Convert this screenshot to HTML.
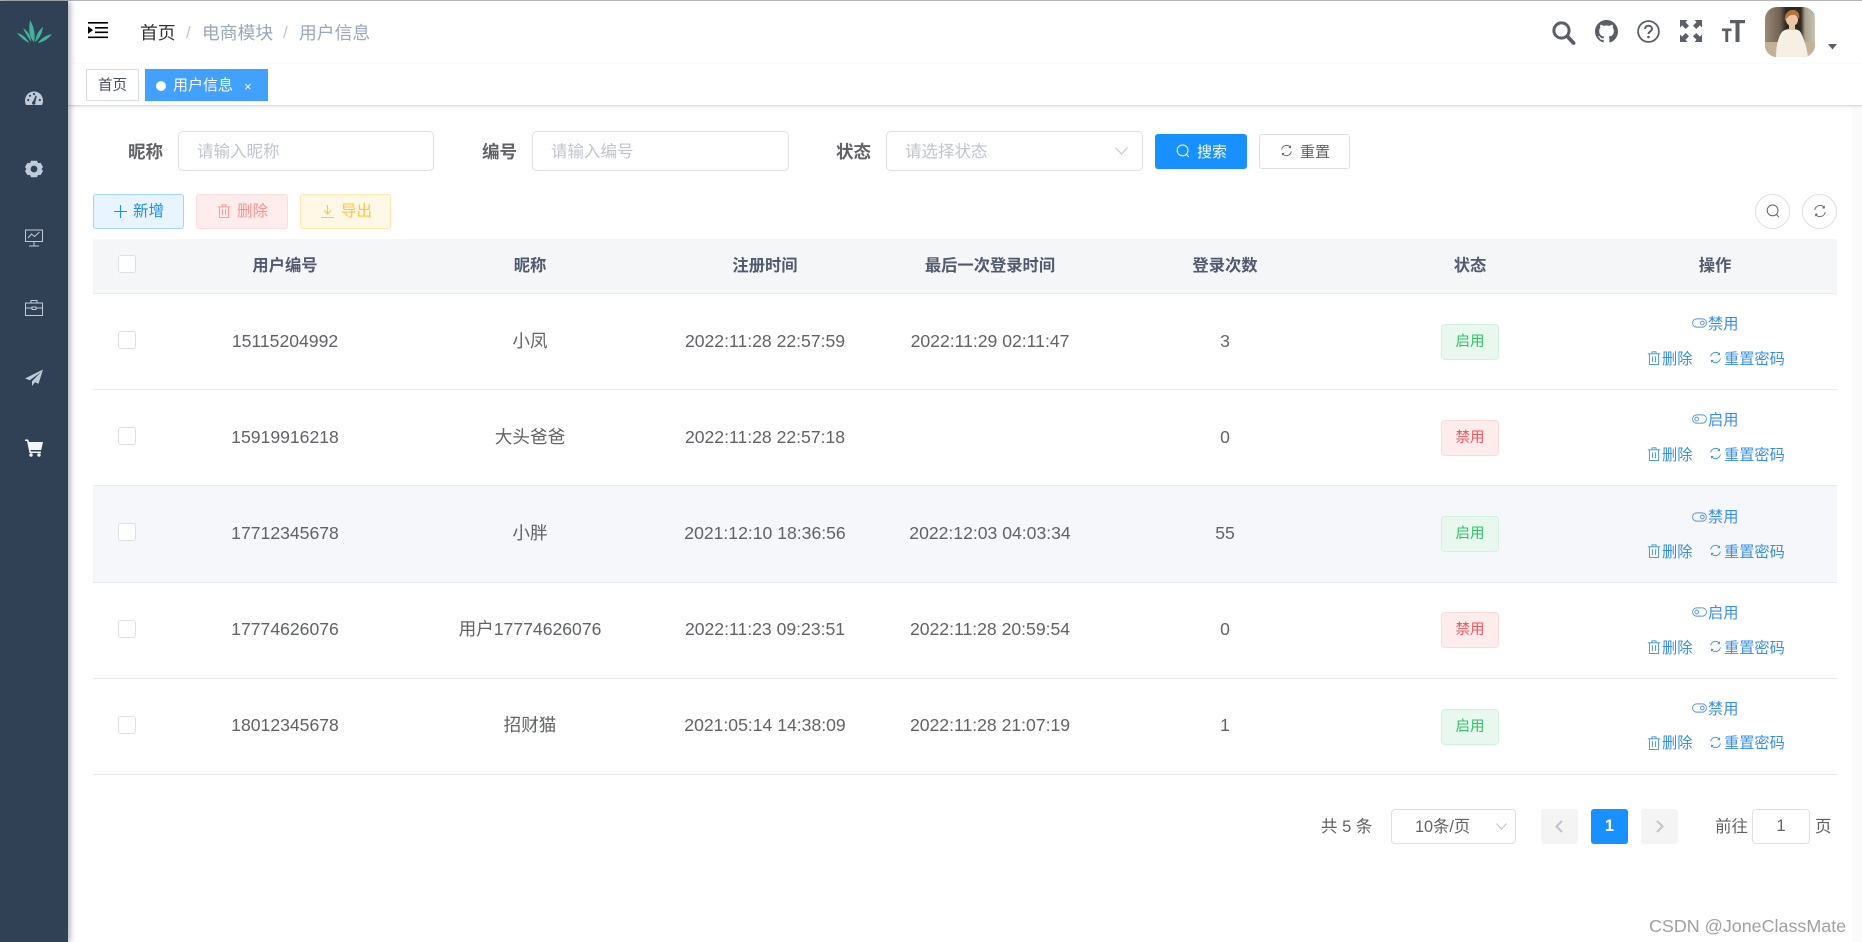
<!DOCTYPE html>
<html lang="zh-CN">
<head>
<meta charset="utf-8">
<title>用户信息</title>
<style>
*{box-sizing:border-box;margin:0;padding:0}
html,body{width:1862px;height:942px;overflow:hidden;background:#fff}
body{position:relative;font-family:"Liberation Sans","Noto Sans CJK SC",sans-serif;color:#606266}
.a{position:absolute}
.t{position:absolute;white-space:nowrap;line-height:24px;height:24px;margin-top:1px}
.c{position:absolute;white-space:nowrap;line-height:24px;height:24px;text-align:center;font-size:17.6px;color:#606266;transform:translateX(-50%)}
.c.h{font-weight:700;font-size:16.3px;color:#515a6e;margin-top:1px}
.cb{position:absolute;left:118px;width:18px;height:18px;border:1px solid #dcdfe6;border-radius:3px;background:#fff}
.ln{position:absolute;left:93px;width:1744px;height:1px;background:#e8eaee}
.tag{position:absolute;left:1441px;width:58px;height:36px;border-radius:4px;font-size:14.5px;line-height:34px;text-align:center;border:1px solid}
.on{background:#e8f8ee;border-color:#d1f1de;color:#2fc069}
.off{background:#feecec;border-color:#fcdada;color:#f0555d}
.l{position:absolute;white-space:nowrap;font-size:15.2px;line-height:20px;height:20px;margin-top:2px;color:#3a8ee6}
.box{position:absolute;background:#fff;border:1px solid #dcdfe6;border-radius:5px}
.ph{position:absolute;font-size:16.5px;color:#c0c4cc;line-height:24px;white-space:nowrap;margin-top:1px}
.lb{position:absolute;font-size:17.5px;font-weight:700;color:#606266;line-height:24px;white-space:nowrap;margin-top:1px}
svg{position:absolute;overflow:visible}
.st{fill:none;stroke:currentColor}
</style>
</head>
<body>
<svg width="0" height="0" style="left:0;top:0">
<defs>
<symbol id="trash" viewBox="0 0 14 14"><path class="st" stroke-width=".9" d="M.8 2.800h12.400M5 2.800V.8h4v2M2.400 2.800v10.600h9.200V2.800M5.400 5.200v5.800M8.600 5.200v5.800" fill="none"/></symbol>
<symbol id="ref" viewBox="0 0 14 14"><path class="st" stroke-width=".9" fill="none" d="M1.800 6A5.300 5.300 0 0 1 11 3.200M12.200 8a5.300 5.300 0 0 1-9.200 2.800"/><path fill="currentColor" d="M11.800 1.400v3H8.900zM2.200 12.600v-3h2.900z"/></symbol>
<symbol id="swoff" viewBox="0 0 16 10"><rect class="st" x=".6" y=".6" width="14.800" height="8.800" rx="4.400" fill="none" stroke-width="1"/><circle class="st" cx="11" cy="5" r="2" fill="none" stroke-width="1"/></symbol>
<symbol id="swon" viewBox="0 0 16 10"><rect class="st" x=".6" y=".6" width="14.800" height="8.800" rx="4.400" fill="none" stroke-width="1"/><circle class="st" cx="5" cy="5" r="2" fill="none" stroke-width="1"/></symbol>
<symbol id="mag" viewBox="0 0 14 14"><circle class="st" cx="6.600" cy="6.400" r="5.400" fill="none" stroke-width="1"/><path class="st" stroke-width="1" d="M10.400 10.400l2.400 2.600" fill="none"/></symbol>
</defs>
</svg>

<!-- top line -->
<div class="a" style="left:0;top:0;width:1862px;height:1px;background:#b9b9b9"></div>
<!-- right strip -->
<div class="a" style="left:1852px;top:1px;width:10px;height:941px;background:#fbfbfc"></div>

<!-- header -->
<div class="a" style="left:68px;top:1px;width:1794px;height:63px;background:#fff;box-shadow:0 1px 4px rgba(0,21,41,.08)"></div>
<!-- tags bar -->
<div class="a" style="left:68px;top:64px;width:1794px;height:42px;background:#fff;border-bottom:1px solid #d8dce5;box-shadow:0 1px 3px rgba(0,0,0,.1)"></div>

<!-- sidebar -->
<div class="a" style="left:0;top:1px;width:68px;height:941px;background:#304156;box-shadow:2px 0 6px rgba(0,21,41,.35)"></div>

<!-- logo -->
<svg style="left:16px;top:19px" width="37" height="24" viewBox="0 0 37 24">
<path fill="#3eb49b" d="M18 23C12 17 13 8 14 1c3 5 6 14 4 22z"/>
<path fill="#3eb49b" d="M19 23c1-6 3-11 8-15-1 6-3 11-8 15z"/>
<path fill="#3eb49b" d="M15 23C12 18 9 14 7 9c5 3 8 8 8 14z"/>
<path fill="#3eb49b" d="M13 24C9 22 4 18 1 14c5 1 10 5 12 10z"/>
<path fill="#3eb49b" d="M22 24c3-5 9-8 14-9-3 4-8 8-14 9z"/>
</svg>

<!-- sidebar icons -->
<svg style="left:25px;top:89px" width="18" height="18" viewBox="0 0 18 18"><path fill="#bfcbd9" d="M9 2.500C4 2.500 0 6.600 0 11.600c0 1.600.4 3 1 4.400h16c.6-1.400 1-2.800 1-4.400 0-5-4-9.100-9-9.100z"/><g fill="#304156"><circle cx="3.200" cy="11" r="1.100"/><circle cx="5" cy="6.800" r="1.100"/><circle cx="9" cy="5" r="1.100"/><circle cx="14.800" cy="11" r="1.100"/><path d="M10.700 6.500l1.100.4-1.500 6.500a1.700 1.700 0 1 1-2.300-.9z"/></g></svg>
<svg style="left:25px;top:160px" width="18" height="18" viewBox="0 0 18 18"><path fill="#bfcbd9" fill-rule="evenodd" d="M6 .8h6l1 2.300 2.600-.2L18 7l-1.500 2 1.500 2-2.400 4.100-2.600-.2-1 2.300H6l-1-2.300-2.600.2L0 11l1.500-2L0 7l2.400-4.100 2.600.2zM9 5.600a3.400 3.400 0 1 0 0 6.800 3.400 3.400 0 0 0 0-6.800z"/></svg>
<svg style="left:25px;top:229px;color:#bfcbd9" width="18" height="18" viewBox="0 0 18 18"><path class="st" fill="none" stroke-width="1" d="M.5 1h17v11.500H.5zM9 12.500V17M4 17h10M3 9l3.500-4 3 2.500 5-4.500"/></svg>
<svg style="left:25px;top:299px;color:#bfcbd9" width="18" height="18" viewBox="0 0 18 18"><path class="st" fill="none" stroke-width="1" d="M.5 4h17v12.500H.5zM6 4V1.500h6V4M.5 9h6.500M11 9h6.500M7 8h4v2.500H7z"/></svg>
<svg style="left:25px;top:369px" width="18" height="18" viewBox="0 0 18 18"><path fill="#bfcbd9" d="M18 .5L0 9.500l4.800 1.800L16 3 7 12.300V17l3-3.700 3.500 1.500z"/></svg>
<svg style="left:25px;top:439px" width="18" height="18" viewBox="0 0 18 18"><path fill="#f2f5f8" d="M0 .5h3.200l.8 2.500h14l-1.800 8H5.500l.4 1.500H16v1.500H4.500L2 2H0z"/><circle cx="6" cy="16" r="1.700" fill="#f2f5f8"/><circle cx="14" cy="16" r="1.700" fill="#f2f5f8"/></svg>

<!-- hamburger -->
<svg style="left:88px;top:21px" width="20" height="18" viewBox="0 0 20 18"><path fill="#000" d="M0 1h20v1.600H0zM7 6h13v1.600H7zM7 10.500h13v1.600H7zM0 15.500h20v1.600H0zM0 5.200l5 3.900-5 3.800z"/></svg>

<!-- breadcrumb -->
<div class="t" style="left:140px;top:20px;font-size:17.800px;color:#303133">首页</div>
<div class="t" style="left:186px;top:20px;font-size:17px;color:#c0c4cc">/</div>
<div class="t" style="left:202px;top:20px;font-size:17.800px;color:#97a8be">电商模块</div>
<div class="t" style="left:283px;top:20px;font-size:17px;color:#c0c4cc">/</div>
<div class="t" style="left:299px;top:20px;font-size:17.800px;color:#97a8be">用户信息</div>

<!-- header right icons -->
<svg style="left:1552px;top:21px" width="24" height="24" viewBox="0 0 24 24"><circle cx="9.500" cy="9.500" r="7.600" fill="none" stroke="#5a5e66" stroke-width="3"/><path stroke="#5a5e66" stroke-width="3.800" stroke-linecap="round" d="M15.500 15.500l6 6.500"/></svg>
<svg style="left:1595px;top:20px" width="23" height="23" viewBox="0 0 16 16"><path fill="#5a5e66" d="M8 0C3.580 0 0 3.580 0 8c0 3.540 2.290 6.530 5.470 7.590.4.070.55-.17.55-.38 0-.19-.01-.82-.01-1.490-2.010.37-2.530-.49-2.690-.94-.09-.23-.48-.94-.82-1.130-.28-.15-.68-.52-.01-.53.63-.01 1.080.58 1.230.82.720 1.210 1.870.870 2.330.66.070-.52.280-.87.510-1.070-1.780-.2-3.640-.89-3.640-3.950 0-.87.31-1.590.82-2.150-.08-.2-.36-1.020.08-2.120 0 0 .67-.21 2.200.82.640-.18 1.320-.27 2-.27s1.360.09 2 .27c1.530-1.040 2.200-.82 2.200-.82.440 1.100.16 1.920.08 2.120.51.560.82 1.270.82 2.150 0 3.070-1.870 3.750-3.650 3.950.29.250.54.730.54 1.480 0 1.070-.01 1.930-.01 2.200 0 .21.150.46.550.38A8.010 8.010 0 0 0 16 8c0-4.420-3.580-8-8-8z"/></svg>
<svg style="left:1637px;top:20px" width="23" height="23" viewBox="0 0 23 23"><circle cx="11.500" cy="11.500" r="10.400" fill="none" stroke="#5a5e66" stroke-width="1.800"/><path fill="none" stroke="#5a5e66" stroke-width="2" d="M8 9c0-2 1.500-3.200 3.500-3.200S15 7 15 8.800c0 2.500-3.500 2.700-3.500 5.200"/><circle cx="11.500" cy="17" r="1.300" fill="#5a5e66"/></svg>
<svg style="left:1680px;top:20px" width="22" height="22" viewBox="0 0 22 22"><path fill="#5a5e66" d="M0 0h7.500L5.400 2.100 9 5.700 5.700 9 2.100 5.400 0 7.500zM22 0v7.500l-2.100-2.100L16.300 9 13 5.700l3.600-3.600L14.500 0zM0 22v-7.500l2.100 2.100L5.700 13 9 16.300l-3.600 3.600L7.500 22zM22 22h-7.500l2.100-2.100-3.600-3.600 3.300-3.300 3.600 3.600 2.100-2.100z"/></svg>
<svg style="left:1722px;top:20px" width="23" height="23" viewBox="0 0 23 23"><path fill="#5a5e66" d="M8 0h15v3.200h-5.500V22H13.500V3.200H8zM0 8.500h9.500v2.600H6.200V22H3.300V11.100H0z"/></svg>

<!-- avatar -->
<svg style="left:1765px;top:7px" width="50" height="50" viewBox="0 0 50 50">
<defs><clipPath id="av"><rect width="50" height="50" rx="12"/></clipPath>
<linearGradient id="avg" x1="0" x2="1"><stop offset="0" stop-color="#9a8a76"/><stop offset=".3" stop-color="#6f6152"/><stop offset=".42" stop-color="#2e2822"/><stop offset=".72" stop-color="#2f2a26"/><stop offset=".8" stop-color="#a89f8c"/><stop offset="1" stop-color="#c9c4b4"/></linearGradient></defs>
<g clip-path="url(#av)">
<rect width="50" height="50" fill="url(#avg)"/>
<rect y="35" width="50" height="15" fill="#c4b196"/>
<path fill="#f5efe4" d="M11 50c0-10 2-20 6-25 3-3 7-3 10-3 4 0 8 1 9 4 3 6 6 15 7 24z"/>
<circle cx="27" cy="13" r="6" fill="#e9c6a6"/>
<path fill="#b8713a" d="M20 14c-1-7 3-11 8-11 5 0 7 4 6 9-2-3-4-5-7-4-3 0-5 3-7 6z"/>
<path fill="#e9c6a6" d="M24 17h6v6h-6z"/>
<path fill="#3fb89f" d="M46 4l4 0 0 6z"/>
</g></svg>
<svg style="left:1828px;top:44px" width="9" height="6" viewBox="0 0 9 6"><path fill="#5a5e66" d="M0 0h9L4.500 5.500z"/></svg>

<!-- tags -->
<div class="a" style="left:86px;top:69px;width:53px;height:32px;background:#fff;border:1px solid #d8dce5;font-size:14.500px;line-height:32px;text-align:center;color:#495060">首页</div>
<div class="a" style="left:145px;top:69px;width:123px;height:32px;background:#42a0ff"></div>
<div class="a" style="left:156px;top:81px;width:10px;height:10px;border-radius:50%;background:#fff"></div>
<div class="t" style="left:173px;top:73px;font-size:15px;color:#fff">用户信息</div>
<div class="t" style="left:244px;top:74px;font-size:13px;color:#fff">×</div>

<!-- search form -->
<div class="lb" style="left:128px;top:139px">昵称</div>
<div class="box" style="left:178px;top:131px;width:256px;height:40px"></div>
<div class="ph" style="left:197px;top:139px">请输入昵称</div>
<div class="lb" style="left:482px;top:139px">编号</div>
<div class="box" style="left:532px;top:131px;width:257px;height:40px"></div>
<div class="ph" style="left:551px;top:139px">请输入编号</div>
<div class="lb" style="left:836px;top:139px">状态</div>
<div class="box" style="left:886px;top:131px;width:257px;height:40px"></div>
<div class="ph" style="left:905px;top:139px">请选择状态</div>
<svg style="left:1115px;top:147px" width="13" height="8" viewBox="0 0 13 8"><path fill="none" stroke="#c0c4cc" stroke-width="1.100" d="M.5.500l6 6.500 6-6.500"/></svg>
<div class="a" style="left:1155px;top:134px;width:92px;height:35px;background:#1890ff;border-radius:3px"></div>
<svg style="left:1176px;top:144px;color:#fff" width="14" height="14"><use href="#mag"/></svg>
<div class="t" style="left:1197px;top:140px;font-size:15px;color:#fff">搜索</div>
<div class="box" style="left:1259px;top:134px;width:91px;height:35px;border-radius:3px"></div>
<svg style="left:1280px;top:144px;color:#606266" width="13" height="13"><use href="#ref"/></svg>
<div class="t" style="left:1300px;top:140px;font-size:15px;color:#606266">重置</div>

<!-- toolbar -->
<div class="a" style="left:93px;top:194px;width:91px;height:35px;border-radius:3px;background:#e8f4ff;border:1px solid #a3d3ff"></div>
<svg style="left:114px;top:205px" width="13" height="13" viewBox="0 0 13 13"><path stroke="#1890ff" stroke-width="1.100" d="M6.500 0v13M0 6.500h13"/></svg>
<div class="t" style="left:133px;top:199px;font-size:15.500px;color:#1890ff">新增</div>
<div class="a" style="left:196px;top:194px;width:92px;height:35px;border-radius:3px;background:#ffeded;border:1px solid #ffdbdb"></div>
<svg style="left:217px;top:204px;color:#ff8e8e" width="14" height="14"><use href="#trash"/></svg>
<div class="t" style="left:237px;top:199px;font-size:15.500px;color:#ff9090">删除</div>
<div class="a" style="left:300px;top:194px;width:91px;height:35px;border-radius:3px;background:#fff8e6;border:1px solid #ffe7ad"></div>
<svg style="left:321px;top:205px" width="13" height="13" viewBox="0 0 13 13"><path fill="none" stroke="#ffc440" stroke-width="1.100" d="M6.500 0v8.500M3 5.500l3.500 3.500L10 5.500M0 12.500h13"/></svg>
<div class="t" style="left:341px;top:199px;font-size:15.500px;color:#ffc440">导出</div>
<div class="a" style="left:1755px;top:194px;width:35px;height:35px;border-radius:50%;border:1px solid #dcdfe6"></div>
<svg style="left:1766px;top:204px;color:#606266" width="14" height="14"><use href="#mag"/></svg>
<div class="a" style="left:1802px;top:194px;width:35px;height:35px;border-radius:50%;border:1px solid #dcdfe6"></div>
<svg style="left:1813px;top:204px;color:#606266" width="14" height="14"><use href="#ref"/></svg>

<!-- table header -->
<div class="a" style="left:93px;top:239px;width:1744px;height:54px;background:#f5f6f8"></div>
<div class="ln" style="top:293px"></div>
<div class="cb" style="top:255px"></div>
<div class="c h" style="left:285px;top:253px">用户编号</div>
<div class="c h" style="left:530px;top:253px">昵称</div>
<div class="c h" style="left:765px;top:253px">注册时间</div>
<div class="c h" style="left:990px;top:253px">最后一次登录时间</div>
<div class="c h" style="left:1225px;top:253px">登录次数</div>
<div class="c h" style="left:1470px;top:253px">状态</div>
<div class="c h" style="left:1715px;top:253px">操作</div>

<!-- row 1 -->
<div class="ln" style="top:389px"></div>
<div class="cb" style="top:331px"></div>
<div class="c" style="left:285px;top:329px">15115204992</div>
<div class="c" style="left:530px;top:329px">小凤</div>
<div class="c" style="left:765px;top:329px">2022:11:28 22:57:59</div>
<div class="c" style="left:990px;top:329px">2022:11:29 02:11:47</div>
<div class="c" style="left:1225px;top:329px">3</div>
<div class="tag on" style="top:324px">启用</div>
<svg style="left:1692px;top:318px;color:#5a8fe0" width="15" height="10"><use href="#swoff"/></svg>
<div class="l" style="left:1708px;top:313px">禁用</div>
<svg style="left:1647px;top:351px;color:#3a8ee6" width="14" height="14"><use href="#trash"/></svg>
<div class="l" style="left:1662px;top:348px">删除</div>
<svg style="left:1709px;top:351px;color:#3a8ee6" width="13" height="13"><use href="#ref"/></svg>
<div class="l" style="left:1724px;top:348px">重置密码</div>

<!-- row 2 -->
<div class="ln" style="top:485px"></div>
<div class="cb" style="top:427px"></div>
<div class="c" style="left:285px;top:425px">15919916218</div>
<div class="c" style="left:530px;top:425px">大头爸爸</div>
<div class="c" style="left:765px;top:425px">2022:11:28 22:57:18</div>
<div class="c" style="left:1225px;top:425px">0</div>
<div class="tag off" style="top:420px">禁用</div>
<svg style="left:1692px;top:414px;color:#5a8fe0" width="15" height="10"><use href="#swon"/></svg>
<div class="l" style="left:1708px;top:409px">启用</div>
<svg style="left:1647px;top:447px;color:#3a8ee6" width="14" height="14"><use href="#trash"/></svg>
<div class="l" style="left:1662px;top:444px">删除</div>
<svg style="left:1709px;top:447px;color:#3a8ee6" width="13" height="13"><use href="#ref"/></svg>
<div class="l" style="left:1724px;top:444px">重置密码</div>

<!-- row 3 -->
<div class="a" style="left:93px;top:486px;width:1744px;height:96px;background:#f5f7fa"></div>
<div class="ln" style="top:582px"></div>
<div class="cb" style="top:523px"></div>
<div class="c" style="left:285px;top:521px">17712345678</div>
<div class="c" style="left:530px;top:521px">小胖</div>
<div class="c" style="left:765px;top:521px">2021:12:10 18:36:56</div>
<div class="c" style="left:990px;top:521px">2022:12:03 04:03:34</div>
<div class="c" style="left:1225px;top:521px">55</div>
<div class="tag on" style="top:516px">启用</div>
<svg style="left:1692px;top:512px;color:#5a8fe0" width="15" height="10"><use href="#swoff"/></svg>
<div class="l" style="left:1708px;top:506px">禁用</div>
<svg style="left:1647px;top:544px;color:#3a8ee6" width="14" height="14"><use href="#trash"/></svg>
<div class="l" style="left:1662px;top:541px">删除</div>
<svg style="left:1709px;top:544px;color:#3a8ee6" width="13" height="13"><use href="#ref"/></svg>
<div class="l" style="left:1724px;top:541px">重置密码</div>

<!-- row 4 -->
<div class="ln" style="top:678px"></div>
<div class="cb" style="top:620px"></div>
<div class="c" style="left:285px;top:617px">17774626076</div>
<div class="c" style="left:530px;top:617px">用户17774626076</div>
<div class="c" style="left:765px;top:617px">2022:11:23 09:23:51</div>
<div class="c" style="left:990px;top:617px">2022:11:28 20:59:54</div>
<div class="c" style="left:1225px;top:617px">0</div>
<div class="tag off" style="top:612px">禁用</div>
<svg style="left:1692px;top:607px;color:#5a8fe0" width="15" height="10"><use href="#swon"/></svg>
<div class="l" style="left:1708px;top:602px">启用</div>
<svg style="left:1647px;top:640px;color:#3a8ee6" width="14" height="14"><use href="#trash"/></svg>
<div class="l" style="left:1662px;top:637px">删除</div>
<svg style="left:1709px;top:640px;color:#3a8ee6" width="13" height="13"><use href="#ref"/></svg>
<div class="l" style="left:1724px;top:637px">重置密码</div>

<!-- row 5 -->
<div class="ln" style="top:774px"></div>
<div class="cb" style="top:716px"></div>
<div class="c" style="left:285px;top:713px">18012345678</div>
<div class="c" style="left:530px;top:713px">招财猫</div>
<div class="c" style="left:765px;top:713px">2021:05:14 14:38:09</div>
<div class="c" style="left:990px;top:713px">2022:11:28 21:07:19</div>
<div class="c" style="left:1225px;top:713px">1</div>
<div class="tag on" style="top:709px">启用</div>
<svg style="left:1692px;top:703px;color:#5a8fe0" width="15" height="10"><use href="#swoff"/></svg>
<div class="l" style="left:1708px;top:698px">禁用</div>
<svg style="left:1647px;top:736px;color:#3a8ee6" width="14" height="14"><use href="#trash"/></svg>
<div class="l" style="left:1662px;top:732px">删除</div>
<svg style="left:1709px;top:736px;color:#3a8ee6" width="13" height="13"><use href="#ref"/></svg>
<div class="l" style="left:1724px;top:732px">重置密码</div>

<!-- pagination -->
<div class="t" style="left:1321px;top:814px;font-size:16.500px;color:#606266">共 5 条</div>
<div class="box" style="left:1391px;top:809px;width:125px;height:35px;border-radius:4px"></div>
<div class="t" style="left:1415px;top:814px;font-size:16.300px;color:#606266">10条/页</div>
<svg style="left:1496px;top:823px" width="11" height="7" viewBox="0 0 11 7"><path fill="none" stroke="#c0c4cc" stroke-width="1.100" d="M.5.500l5 5.500 5-5.500"/></svg>
<div class="a" style="left:1541px;top:809px;width:37px;height:35px;background:#f4f4f5;border-radius:3px"></div>
<svg style="left:1555px;top:820px" width="8" height="13" viewBox="0 0 8 13"><path fill="none" stroke="#c0c4cc" stroke-width="2" d="M7 1L1.500 6.500 7 12"/></svg>
<div class="a" style="left:1591px;top:809px;width:37px;height:35px;background:#1890ff;border-radius:3px;color:#fff;font-weight:700;font-size:16.500px;line-height:35px;text-align:center">1</div>
<div class="a" style="left:1641px;top:809px;width:37px;height:35px;background:#f4f4f5;border-radius:3px"></div>
<svg style="left:1656px;top:820px" width="8" height="13" viewBox="0 0 8 13"><path fill="none" stroke="#c0c4cc" stroke-width="2" d="M1 1l5.500 5.500L1 12"/></svg>
<div class="t" style="left:1715px;top:814px;font-size:16.500px;color:#606266">前往</div>
<div class="box" style="left:1752px;top:809px;width:58px;height:35px;border-radius:4px;text-align:center;font-size:16.500px;line-height:33px;color:#606266">1</div>
<div class="t" style="left:1815px;top:814px;font-size:16.500px;color:#606266">页</div>

<!-- watermark -->
<div class="t" style="left:1649px;top:913px;font-size:17.900px;color:#a0a0a0">CSDN @JoneClassMate</div>
</body>
</html>
